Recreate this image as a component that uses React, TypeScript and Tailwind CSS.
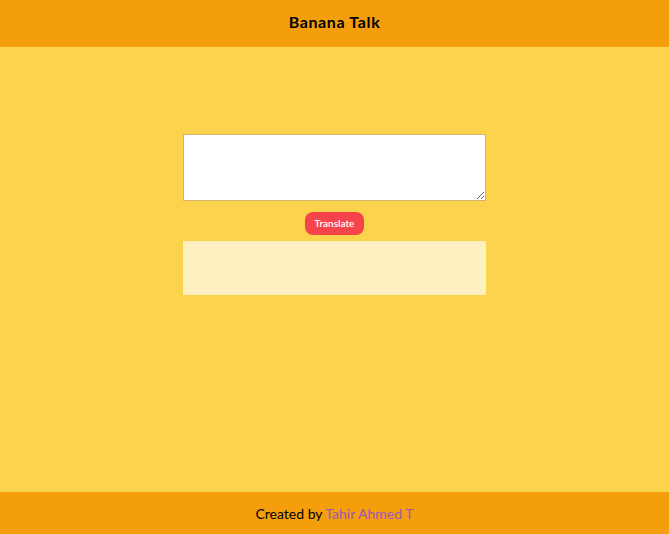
export default function App() {
  return (
    <div
      className="h-screen flex flex-col bg-[#fcd34d]"
      style={{ fontFamily: "Lato, 'Open Sans', sans-serif" }}
    >
      <header className="h-[47px] bg-[#f59e0b] flex items-center justify-center pb-[3px]">
        <h1 className="text-[16px] font-bold text-black tracking-[0.04em]">Banana Talk</h1>
      </header>

      <main className="flex-1 flex flex-col items-center pt-[87px]">
        <textarea className="w-[303px] h-[67px] bg-white border border-[#d6b36a] outline-none"></textarea>
        <button className="mt-[11px] w-[59px] h-[23px] rounded-lg bg-[#f7434a] text-white text-[10px] font-semibold">
          Translate
        </button>
        <div className="mt-[6px] w-[303px] h-[54px] bg-[#fef0c0]"></div>
      </main>

      <footer className="h-[42px] bg-[#f59e0b] flex items-center justify-center text-[14px] text-black">
        <span>
          Created by <span className="text-[#9b59b6]">Tahir Ahmed T</span>
        </span>
      </footer>
    </div>
  );
}
